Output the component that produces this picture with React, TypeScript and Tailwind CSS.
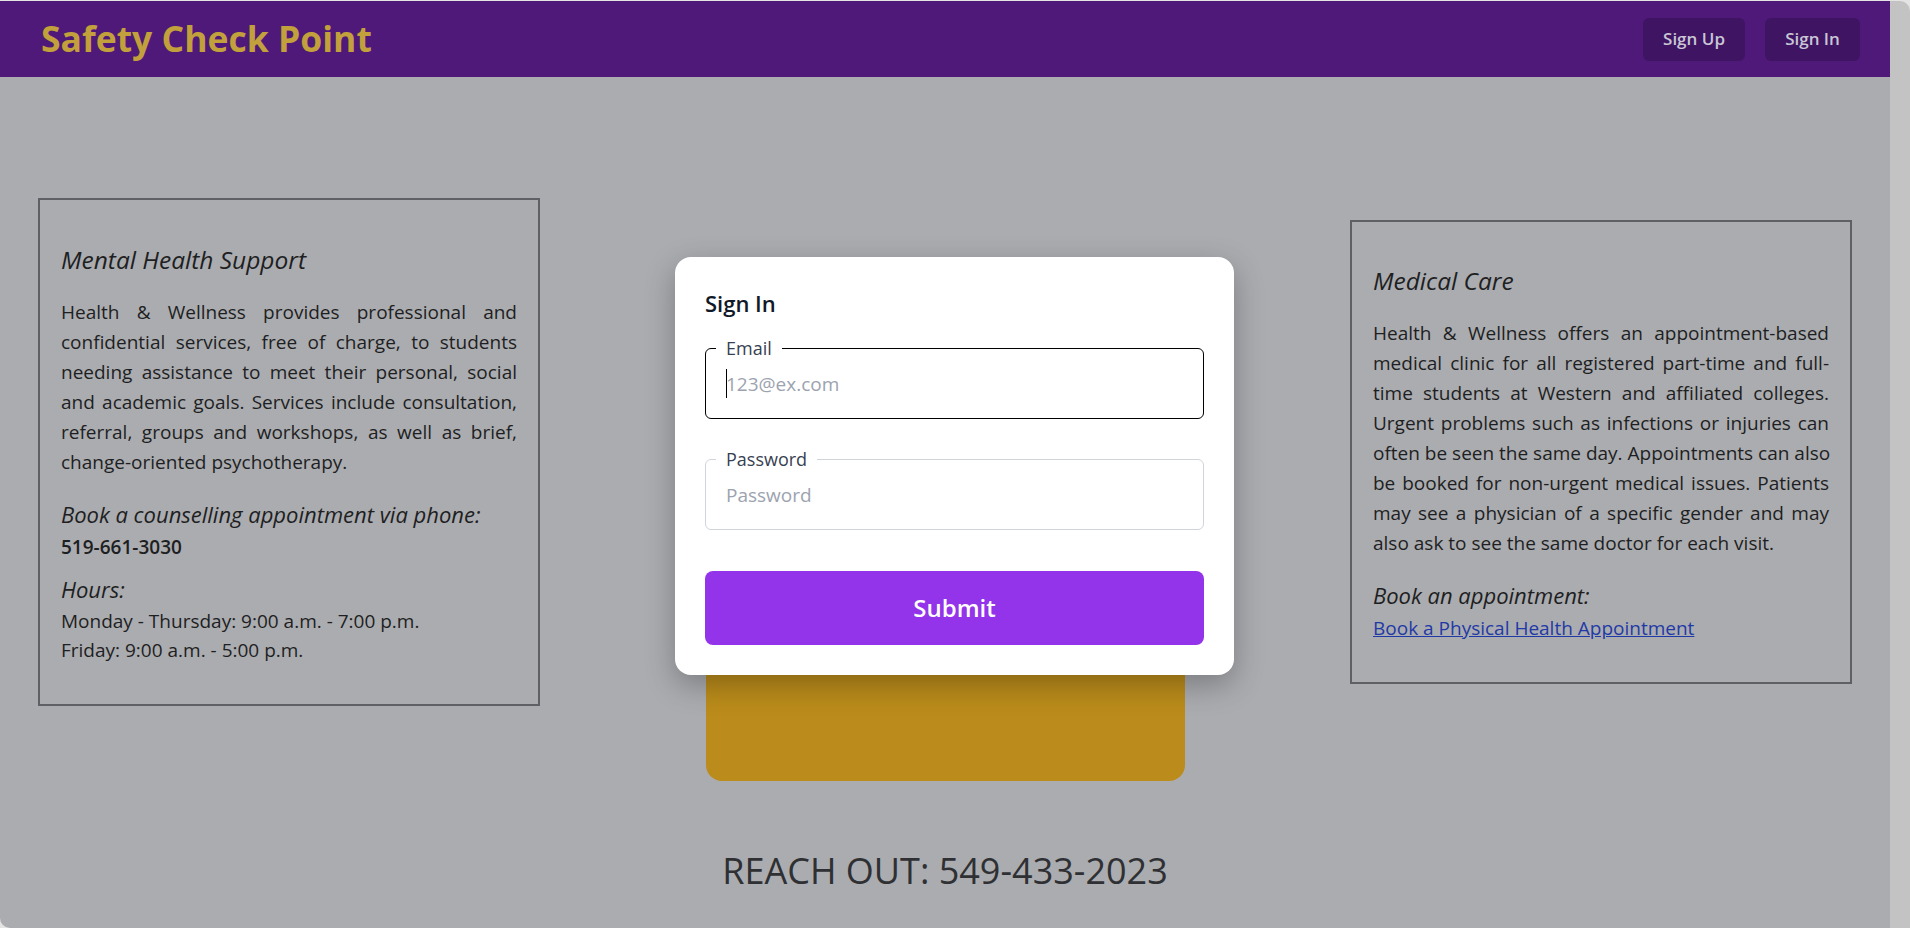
import React from "react";

const mentalLines = [
  "Health & Wellness provides professional and",
  "confidential services, free of charge, to students",
  "needing assistance to meet their personal, social",
  "and academic goals. Services include consultation,",
  "referral, groups and workshops, as well as brief,",
  "change-oriented psychotherapy.",
];

const medicalLines = [
  "Health & Wellness offers an appointment-based",
  "medical clinic for all registered part-time and full-",
  "time students at Western and affiliated colleges.",
  "Urgent problems such as infections or injuries can",
  "often be seen the same day. Appointments can also",
  "be booked for non-urgent medical issues. Patients",
  "may see a physician of a specific gender and may",
  "also ask to see the same doctor for each visit.",
];

function Justified({ lines }: { lines: string[] }) {
  return (
    <div className="mt-[21px] text-[19px] leading-[30px]">
      {lines.map((l, i) => (
        <div
          key={i}
          className={
            i < lines.length - 1
              ? "text-justify [text-align-last:justify] whitespace-nowrap"
              : "whitespace-nowrap"
          }
        >
          {l}
        </div>
      ))}
    </div>
  );
}

function Field({
  label,
  placeholder,
  focused,
}: {
  label: string;
  placeholder: string;
  focused?: boolean;
}) {
  return (
    <fieldset
      className={
        "h-[81px] rounded-[6px] border px-[10px] " +
        (focused ? "border-black" : "border-[#d1d5db]")
      }
    >
      <legend className="px-[10px] text-[18px] font-medium leading-[20px] text-[#374151]">
        {label}
      </legend>
      <div className="relative">
        {focused && (
          <span className="absolute left-[10px] top-[11px] h-[29px] w-px bg-black" />
        )}
        <input
          className="h-[52px] w-full px-[10px] text-[19px] text-[#111827] outline-none placeholder:text-[#9ca3af]"
          placeholder={placeholder}
        />
      </div>
    </fieldset>
  );
}

export default function App() {
  return (
    <div className="h-[928px] w-[1910px] overflow-hidden bg-[#e4e4e4] pt-px font-['Open_Sans',sans-serif]">
      <div className="flex h-[927px] overflow-hidden rounded-tr-[10px] rounded-bl-[10px]">
        <div className="relative w-[1890px] bg-[#abacb0] text-[#1e1f22]">
          <header className="flex h-[76px] items-center justify-between bg-[#4f197a] pl-[41px] pr-[30px]">
            <h1 className="text-[35.5px] font-bold text-[#c2a03b]">Safety Check Point</h1>
            <div className="flex gap-[20px]">
              <button className="h-[43px] w-[102px] rounded-[6px] bg-[#3f1462] text-[17px] font-semibold text-[#c9c6d6]">
                Sign Up
              </button>
              <button className="h-[43px] w-[95px] rounded-[6px] bg-[#3f1462] text-[17px] font-semibold text-[#c9c6d6]">
                Sign In
              </button>
            </div>
          </header>

          <main className="flex h-[704px] items-center justify-between px-[38px] pt-[45px]">
            <section className="w-[502px] border-2 border-[#5f6066] px-[21px] pb-[39px] pt-[44px]">
              <h2 className="text-[24.5px] italic leading-[32px]">Mental Health Support</h2>
              <Justified lines={mentalLines} />
              <h3 className="mt-[22px] text-[22px] italic leading-[30px]">
                Book a counselling appointment via phone:
              </h3>
              <p className="mt-[3px] text-[19px] font-semibold leading-[30px]">519-661-3030</p>
              <h3 className="mt-[12px] text-[22px] italic leading-[30px]">Hours:</h3>
              <p className="mt-[3px] text-[19px] leading-[29px]">
                Monday - Thursday: 9:00 a.m. - 7:00 p.m.
              </p>
              <p className="text-[19px] leading-[29px]">Friday: 9:00 a.m. - 5:00 p.m.</p>
            </section>

            <div className="h-[440px] w-[479px] self-end rounded-b-[16px] bg-[#bb8c1b]" />

            <section className="w-[502px] border-2 border-[#5f6066] px-[21px] pb-[39px] pt-[43px]">
              <h2 className="text-[24.5px] italic leading-[32px]">Medical Care</h2>
              <Justified lines={medicalLines} />
              <h3 className="mt-[22px] text-[22px] italic leading-[30px]">Book an appointment:</h3>
              <a href="#" className="mt-[3px] block text-[19px] leading-[30px] text-[#1f3aa6] underline">
                Book a Physical Health Appointment
              </a>
            </section>
          </main>

          <p className="mt-[65px] text-center text-[36px] leading-[50px] text-[#2f3033]">
            REACH OUT: 549-433-2023
          </p>

          <div className="absolute left-[675px] top-[256px] w-[559px] rounded-[16px] bg-white px-[30px] pb-[30px] pt-[31px] shadow-[0_10px_30px_rgba(0,0,0,0.28)]">
            <h2 className="text-[22px] font-semibold leading-[30px] text-[#111827]">Sign In</h2>
            <form className="mt-[20px] flex flex-col gap-[30px]" onSubmit={(e) => e.preventDefault()}>
              <Field label="Email" placeholder="123@ex.com" focused />
              <Field label="Password" placeholder="Password" />
              <button
                type="submit"
                className="mt-[11px] h-[74px] rounded-[8px] bg-[#9333ea] text-[24px] font-semibold text-white"
              >
                Submit
              </button>
            </form>
          </div>
        </div>
        <div className="w-[20px] bg-[#c3c3c3]" />
      </div>
    </div>
  );
}
